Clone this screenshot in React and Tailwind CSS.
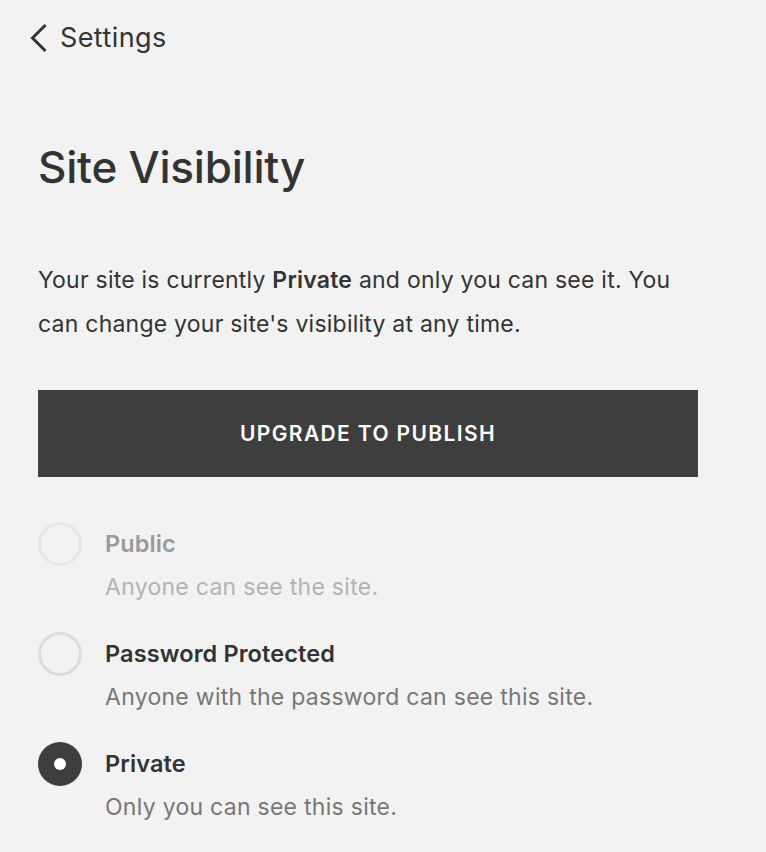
import React from "react";

const options = [
  { title: "Public", desc: "Anyone can see the site.", state: "disabled" },
  { title: "Password Protected", desc: "Anyone with the password can see this site.", state: "off" },
  { title: "Private", desc: "Only you can see this site.", state: "on" },
];

function Radio({ state }) {
  if (state === "on") {
    return (
      <div className="flex h-[44px] w-[44px] shrink-0 items-center justify-center rounded-full bg-[#3e3e3e]">
        <div className="h-[12px] w-[12px] rounded-full bg-white" />
      </div>
    );
  }
  return (
    <div
      className={
        state === "disabled"
          ? "h-[44px] w-[44px] shrink-0 rounded-full border-[3px] border-[#e6e6e6]"
          : "h-[44px] w-[44px] shrink-0 rounded-full border-[3px] border-[#dcdcdc]"
      }
    />
  );
}

export default function App() {
  return (
    <div className="min-h-[852px] w-full bg-[#f2f2f2] font-['Inter',sans-serif] text-[#333]">
      <div className="flex h-[76px] items-center pl-[26px]">
        <svg width="24" height="30" viewBox="0 0 24 30" fill="none" className="mr-[10px]">
          <path d="M19.5 2 L6.5 15 L19.5 28" stroke="#333" strokeWidth="3" />
        </svg>
        <span className="text-[27px] tracking-[0.015em]">Settings</span>
      </div>

      <div className="px-[38px]">
        <h1 className="mt-[61px] text-[44px] leading-[60px] font-medium tracking-[-0.005em]">
          Site Visibility
        </h1>

        <p className="mt-[61px] max-w-[650px] text-[23px] leading-[44px] tracking-[0.01em]">
          Your site is currently <span className="font-semibold">Private</span> and only you can see it. You
          can change your site's visibility at any time.
        </p>

        <button className="mt-[44px] flex h-[87px] w-[660px] items-center justify-center bg-[#3e3e3e] text-[21px] font-semibold tracking-[0.065em] text-white">
          UPGRADE TO PUBLISH
        </button>

        <div className="mt-[45px] flex flex-col gap-[23px]">
          {options.map((o) => (
            <div key={o.title} className="flex items-start gap-[23px]">
              <Radio state={o.state} />
              <div className="flex flex-col">
                <div
                  className={
                    o.state === "disabled"
                      ? "text-[23.5px] leading-[44px] font-semibold tracking-[0.005em] text-[#9a9a9a]"
                      : "text-[23.5px] leading-[44px] font-semibold tracking-[0.005em] text-[#333]"
                  }
                >
                  {o.title}
                </div>
                <div
                  className={
                    o.state === "disabled"
                      ? "text-[23px] leading-[43px] tracking-[0.012em] text-[#b3b3b3]"
                      : "text-[23px] leading-[43px] tracking-[0.012em] text-[#777]"
                  }
                >
                  {o.desc}
                </div>
              </div>
            </div>
          ))}
        </div>
      </div>
    </div>
  );
}
